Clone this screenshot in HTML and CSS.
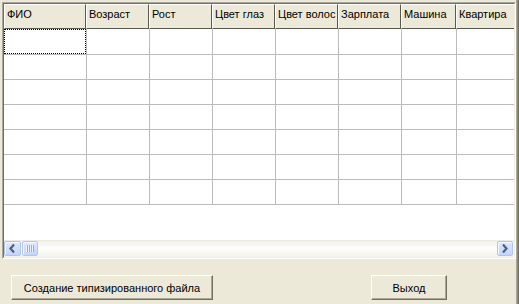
FILE: index.html
```html
<!DOCTYPE html>
<html lang="ru">
<head>
    <meta charset="UTF-8">
    <title>Form1</title>
    <link rel="stylesheet" href="styles.css">
</head>
<body>

    <div class="form">
        <div class="grid">
            <div class="grid-inner">
                <div class="grid-view">
                    <div class="head-row">
                        <div class="head-cell">ФИО</div>
                        <div class="head-cell">Возраст</div>
                        <div class="head-cell">Рост</div>
                        <div class="head-cell">Цвет глаз</div>
                        <div class="head-cell">Цвет волос</div>
                        <div class="head-cell">Зарплата</div>
                        <div class="head-cell">Машина</div>
                        <div class="head-cell">Квартира</div>
                    </div>
                    <div class="row first">
                        <div class="cell"><div class="focus"></div></div>
                        <div class="cell"></div><div class="cell"></div><div class="cell"></div>
                        <div class="cell"></div><div class="cell"></div><div class="cell"></div><div class="cell"></div>
                    </div>
                    <div class="row">
                        <div class="cell"></div><div class="cell"></div><div class="cell"></div><div class="cell"></div>
                        <div class="cell"></div><div class="cell"></div><div class="cell"></div><div class="cell"></div>
                    </div>
                    <div class="row">
                        <div class="cell"></div><div class="cell"></div><div class="cell"></div><div class="cell"></div>
                        <div class="cell"></div><div class="cell"></div><div class="cell"></div><div class="cell"></div>
                    </div>
                    <div class="row">
                        <div class="cell"></div><div class="cell"></div><div class="cell"></div><div class="cell"></div>
                        <div class="cell"></div><div class="cell"></div><div class="cell"></div><div class="cell"></div>
                    </div>
                    <div class="row">
                        <div class="cell"></div><div class="cell"></div><div class="cell"></div><div class="cell"></div>
                        <div class="cell"></div><div class="cell"></div><div class="cell"></div><div class="cell"></div>
                    </div>
                    <div class="row">
                        <div class="cell"></div><div class="cell"></div><div class="cell"></div><div class="cell"></div>
                        <div class="cell"></div><div class="cell"></div><div class="cell"></div><div class="cell"></div>
                    </div>
                    <div class="row">
                        <div class="cell"></div><div class="cell"></div><div class="cell"></div><div class="cell"></div>
                        <div class="cell"></div><div class="cell"></div><div class="cell"></div><div class="cell"></div>
                    </div>
                </div>

                <!-- horizontal scrollbar -->
                <div class="hscroll">
                    <div class="sb-btn sb-left">
                        <svg width="17" height="15" viewBox="0 0 17 15">
                            <polyline points="10,3.5 6.5,7.5 10,11.5" fill="none" stroke="#4d6185" stroke-width="2.2"/>
                        </svg>
                    </div>
                    <div class="sb-thumb">
                        <svg width="16" height="15" viewBox="0 0 16 15">
                            <rect x="4" y="4" width="1" height="7" fill="#eef3ff"/>
                            <rect x="5" y="4" width="1" height="7" fill="#8eaaee"/>
                            <rect x="6" y="4" width="1" height="7" fill="#eef3ff"/>
                            <rect x="7" y="4" width="1" height="7" fill="#8eaaee"/>
                            <rect x="8" y="4" width="1" height="7" fill="#eef3ff"/>
                            <rect x="9" y="4" width="1" height="7" fill="#8eaaee"/>
                            <rect x="10" y="4" width="1" height="7" fill="#eef3ff"/>
                            <rect x="11" y="4" width="1" height="7" fill="#8eaaee"/>
                        </svg>
                    </div>
                    <div class="sb-track"></div>
                    <div class="sb-btn sb-right">
                        <svg width="16" height="15" viewBox="0 0 16 15">
                            <polyline points="6,3.5 9.5,7.5 6,11.5" fill="none" stroke="#4d6185" stroke-width="2.2"/>
                        </svg>
                    </div>
                </div>
            </div>
        </div>

        <div class="buttons">
            <button class="btn btn-create">Создание типизированного файла</button>
            <button class="btn btn-exit">Выход</button>
        </div>
    </div>

</body>
</html>
```

FILE: styles.css
```css
body {
    margin: 0;
    padding: 0;
    font-family: "Liberation Sans", Arial, sans-serif;
    font-size: 11px;
    color: #000;
    background-color: #ece9d8;
}

.form {
    width: 519px;
    height: 304px;
    box-sizing: border-box;
    padding: 2px 0 0 2px;
    background-color: #ece9d8;
    /* window edge on the right */
    box-shadow: inset -1px 0 #716f64, inset -2px 0 #8d8a7d, inset -3px 0 #aca899;
    overflow: hidden;
}

/* sunken 3d border of the grid */
.grid {
    width: 514px;
    height: 257px;
    box-sizing: border-box;
    border: 1px solid;
    border-color: #aca899 #fff #fff #aca899;
}
.grid-inner {
    height: 100%;
    box-sizing: border-box;
    border: 1px solid;
    border-color: #716f64 #f1efe2 #f1efe2 #716f64;
    background-color: #fff;
    display: flex;
    flex-direction: column;
}

.grid-view {
    flex: 1;
    overflow: hidden;
}

.head-row {
    display: grid;
    grid-template-columns: 82px 63px 63px 63px 63px 63px 55px 64px;
    height: 25px;
    width: 516px;
}
.head-cell {
    box-sizing: border-box;
    background-color: #ece9d8;
    border-top: 1px solid #fff;
    border-left: 1px solid #fff;
    border-right: 1px solid #5a584f;
    border-bottom: 1px solid #5a584f;
    padding: 3px 0 0 2px;
    line-height: 13px;
    white-space: nowrap;
    overflow: hidden;
}

.row {
    display: grid;
    grid-template-columns: 83px 63px 63px 63px 63px 63px 55px 63px;
    height: 25px;
    width: 516px;
}
.row.first {
    height: 26px;
}
.cell {
    box-sizing: border-box;
    border-right: 1px solid #bcbcbc;
    border-bottom: 1px solid #bcbcbc;
}
.focus {
    height: 100%;
    box-sizing: border-box;
    border: 1px dotted #000;
}

/* xp style scrollbar */
.hscroll {
    display: flex;
    align-items: center;
    height: 17px;
    background: linear-gradient(to bottom, #e9e8e0 0, #f4f3ee 2px, #fdfdfb 9px, #f3f2ec 100%);
}
.sb-btn,
.sb-thumb {
    height: 15px;
    box-sizing: border-box;
    border: 1px solid #b1c5f5;
    border-radius: 2px;
    background: linear-gradient(to bottom, #dfe8fe, #c3d4fc);
    box-shadow: inset 1px 1px #f4f7ff;
}
.sb-btn svg,
.sb-thumb svg {
    display: block;
    margin: -1px 0 0 -1px;
}
.sb-left {
    width: 17px;
}
.sb-thumb {
    width: 16px;
    margin-left: 1px;
}
.sb-track {
    flex: 1;
}
.sb-right {
    width: 16px;
    margin-right: 1px;
}

.buttons {
    display: flex;
    padding: 16px 0 0 9px;
}
.btn {
    height: 25px;
    box-sizing: border-box;
    padding: 0;
    margin: 0;
    font-family: "Liberation Sans", Arial, sans-serif;
    font-size: 11px;
    color: #000;
    background-color: #ece9d8;
    border: 1px solid;
    border-color: #fff #716f64 #716f64 #fff;
    box-shadow: inset -1px -1px #aca899;
    border-radius: 0;
}
.btn-create {
    width: 202px;
}
.btn-exit {
    width: 76px;
    margin-left: 158px;
}
```
